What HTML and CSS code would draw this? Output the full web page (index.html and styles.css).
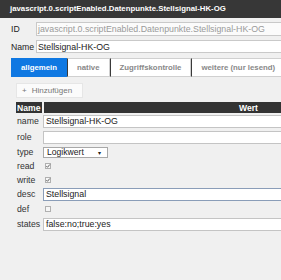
FILE: index.html
```html
<!DOCTYPE html>
<html>
<head>
<meta charset="utf-8">
<link rel="stylesheet" href="styles.css">
</head>
<body>
<div class="titlebar">javascript.0.scriptEnabled.Datenpunkte.Stellsignal-HK-OG</div>
<div class="content">
  <div class="field"><span class="flabel">ID</span><span class="finput ro">javascript.0.scriptEnabled.Datenpunkte.Stellsignal-HK-OG</span></div>
  <div class="field"><span class="flabel">Name</span><span class="finput">Stellsignal-HK-OG</span></div>
  <div class="tabs">
    <span class="tab active">allgemein</span>
    <span class="tab">native</span>
    <span class="tab">Zugriffskontrolle</span>
    <span class="tab">weitere (nur lesend)</span>
  </div>
  <div class="panel">
    <div class="addbtn"><span class="plus">+</span><span>Hinzufügen</span></div>
    <div class="grid">
      <div class="hcell">Name</div><div class="hcell wert">Wert</div>
      <div class="lab r16">name</div><div class="val r16"><span class="tinput">Stellsignal-HK-OG</span></div>
      <div class="lab r16">role</div><div class="val r16"><span class="tinput"></span></div>
      <div class="lab r14">type</div><div class="val r14"><span class="select"><span>Logikwert</span><span class="arrow">▾</span></span></div>
      <div class="lab r14">read</div><div class="val r14"><span class="cb"><svg viewBox="0 0 6 6" width="6" height="6"><path d="M1.3 3.1 L2.5 4.3 L4.8 1.5" fill="none" stroke="#555" stroke-width="0.9"/></svg></span></div>
      <div class="lab r13">write</div><div class="val r13"><span class="cb"><svg viewBox="0 0 6 6" width="6" height="6"><path d="M1.3 3.1 L2.5 4.3 L4.8 1.5" fill="none" stroke="#555" stroke-width="0.9"/></svg></span></div>
      <div class="lab r16">desc</div><div class="val r16"><span class="tinput focus">Stellsignal</span></div>
      <div class="lab r14">def</div><div class="val r14"><span class="cb"></span></div>
      <div class="lab r16">states</div><div class="val r16"><span class="tinput">false:no;true:yes</span></div>
    </div>
  </div>
</div>
</body>
</html>
```

FILE: styles.css
```css
html, body {
  margin: 0;
  padding: 0;
}
body {
  width: 281px;
  height: 280px;
  overflow: hidden;
  background: #f0f0f0;
  font-family: "Liberation Sans", Arial, sans-serif;
  color: #222;
}
.titlebar {
  height: 18px;
  line-height: 18px;
  background: #373737;
  color: #fff;
  font-weight: bold;
  font-size: 7.8px;
  padding-left: 10px;
  white-space: nowrap;
}
.content {
  padding: 4px 0 0 11px;
}
.field {
  display: flex;
  align-items: center;
  height: 14px;
  margin-bottom: 4px;
}
.field + .field {
  height: 13px;
}
.flabel {
  width: 25px;
  font-size: 8.7px;
  color: #222;
}
.finput {
  flex: 1;
  min-width: 0;
  height: 100%;
  box-sizing: border-box;
  border: 1px solid #c9c9c9;
  border-right: 0;
  background: #fff;
  font-size: 8.8px;
  color: #222;
  padding-left: 1px;
  display: flex;
  align-items: center;
  white-space: nowrap;
  overflow: hidden;
}
.finput.ro {
  color: #9a9a9a;
  background: #fbfbfb;
}
.tabs {
  display: flex;
  height: 19px;
  margin-top: 5px;
}
.tab {
  display: flex;
  align-items: center;
  box-sizing: border-box;
  height: 19px;
  padding: 0 9px;
  font-size: 7.8px;
  font-weight: bold;
  color: #888;
  background: #fff;
  border: 1px solid #d0d0d0;
  border-left: 1px solid #3a3a3a;
  white-space: nowrap;
}
.tab:last-child {
  flex: 1;
  border-right: 0;
}
.tab.active {
  background: #0f78e2;
  color: #fff;
  border-color: #0f78e2;
}
.panel {
  padding-left: 5px;
}
.addbtn {
  display: inline-flex;
  align-items: center;
  height: 15px;
  width: 67px;
  box-sizing: border-box;
  margin-top: 6px;
  background: #fbfbfb;
  border: 1px solid #e6e6e6;
  font-size: 8px;
  color: #777;
  padding-left: 5px;
}
.plus {
  margin-right: 5px;
}
.grid {
  margin-top: 4px;
  display: grid;
  grid-template-columns: 26px 1fr;
  column-gap: 2px;
}
.hcell {
  height: 11px;
  background: #333;
  color: #fff;
  font-weight: bold;
  font-size: 8.6px;
  display: flex;
  align-items: center;
  padding-left: 1px;
}
.hcell.wert {
  padding-left: 195px;
}
.lab {
  display: flex;
  align-items: center;
  font-size: 8.7px;
  color: #333;
  padding-left: 1px;
}
.val {
  display: flex;
  align-items: center;
  margin-left: -1px;
  min-width: 0;
}
.r16 { height: 16px; }
.r14 { height: 14px; }
.r13 { height: 13px; }
.tinput {
  display: flex;
  align-items: center;
  width: 100%;
  height: 13px;
  box-sizing: border-box;
  border: 1px solid #c4c4c4;
  border-right: 0;
  background: #fff;
  font-size: 8.8px;
  color: #222;
  padding-left: 2px;
  white-space: nowrap;
}
.tinput.focus {
  border-color: #8a9db8;
}
.select {
  display: flex;
  align-items: center;
  justify-content: space-between;
  width: 65px;
  height: 11px;
  box-sizing: border-box;
  border: 1px solid #a8a8a8;
  background: #fff;
  font-size: 8.6px;
  color: #222;
  padding: 0 6px 0 3px;
}
.arrow {
  font-size: 6px;
}
.cb {
  display: block;
  width: 6px;
  height: 6px;
  box-sizing: border-box;
  border: 1px solid #b0b0b0;
  background: #f6f6f6;
  margin-left: 2px;
  position: relative;
}
.cb svg {
  position: absolute;
  left: -1px;
  top: -1px;
}
```
